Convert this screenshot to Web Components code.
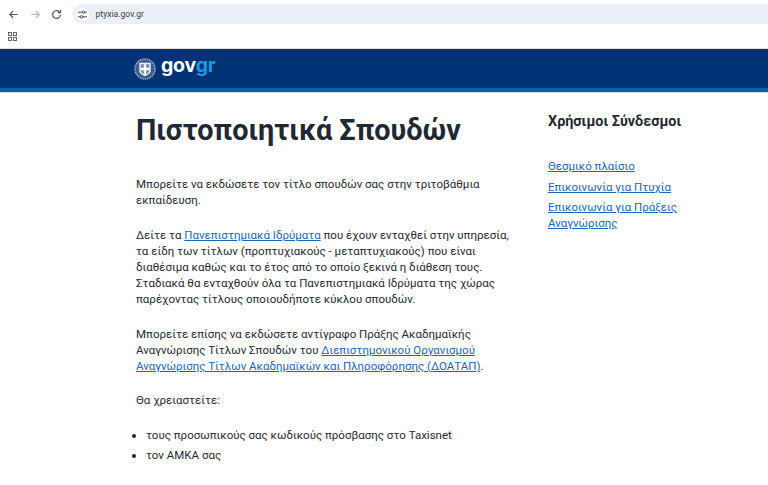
<!DOCTYPE html>
<html lang="el"><head><meta charset="utf-8"><style>
html,body{margin:0;padding:0;height:100%;overflow:hidden;background:#fff;font-family:Roboto,"Liberation Sans",sans-serif;color:#1f2933}
</style></head><body>
<browser-bar></browser-bar>
<site-header></site-header>
<page-layout>
<main-content></main-content>
<side-links></side-links>
</page-layout>
<script>
function def(name,html){customElements.define(name,class extends HTMLElement{constructor(){super();this.attachShadow({mode:'open'}).innerHTML=html}})}
def('browser-bar',`<style>
:host{display:block;height:49px;background:#fff;box-sizing:border-box;border-bottom:1px solid #d8dadd}
.top{height:28px;display:flex;align-items:center;padding-left:8px;gap:10.5px}
svg{display:block;flex:none}
.omni{flex:1;height:20px;border-radius:10px 0 0 10px;background:#ebf0f8;display:flex;align-items:center;gap:6.5px;padding-left:3.5px;box-sizing:border-box;font:8.6px Roboto,sans-serif;color:#3c4043}
.tune{width:13px;height:13px;border-radius:50%;background:#fff;display:flex;align-items:center;justify-content:center}
.book{height:17px;display:flex;align-items:center;padding-left:8px}
</style>
<div class="top">
<svg width="11" height="11" viewBox="0 0 12 12" fill="none" stroke="#555" stroke-width="1.3"><path d="M10.500 6H2M5.600 2.400L2 6l3.600 3.600"/></svg>
<svg width="11" height="11" viewBox="0 0 12 12" fill="none" stroke="#b0b2b4" stroke-width="1.3"><path d="M1.500 6H10M6.400 2.400L10 6l-3.600 3.600"/></svg>
<svg width="11" height="11" viewBox="0 0 12 12" fill="none" stroke="#555" stroke-width="1.3"><path d="M10.200 6.200A4.200 4.200 0 1 1 8.900 3"/><path d="M10.400 1v3H7.400"/></svg>
<div class="omni"><span class="tune"><svg width="9" height="9" viewBox="0 0 9 9" fill="none" stroke="#474747" stroke-width="1"><path d="M0 2.200h4M7 2.200h2M2 6.800h-2M5 6.800h4"/><circle cx="5.500" cy="2.200" r="1.200"/><circle cx="3.500" cy="6.800" r="1.200"/></svg></span><span>ptyxia.gov.gr</span></div>
</div>
<div class="book"><svg width="9" height="9" viewBox="0 0 9 9" fill="none" stroke="#666" stroke-width="1"><rect x=".5" y=".5" width="3" height="3"/><rect x="5.500" y=".5" width="3" height="3"/><rect x=".5" y="5.500" width="3" height="3"/><rect x="5.500" y="5.500" width="3" height="3"/></svg></div>`);
def('site-header',`<style>
:host{display:block;height:39px;background:#003375;border-bottom:4px solid #0565b0;box-shadow:0 1px 0 #d5dbe3;padding-left:134px}
.logo{display:flex;align-items:center;height:39px;gap:5px}
svg{display:block}
.w{font:700 19.5px/1 Inter,Roboto,sans-serif;letter-spacing:-.2px;color:#fff;position:relative;top:-3px}
.w b{font-weight:700;color:#1d9be0}
</style><div class="logo">
<svg width="22" height="22" viewBox="0 0 23 23"><circle cx="11.500" cy="11.500" r="10.500" fill="#3a5c8e" stroke="#a9bbd2" stroke-width="1.500" stroke-dasharray="1.200 .7"/><path d="M5.500 5h12v8.500c0 2.400-3 4-6 5.500-3-1.500-6-3.100-6-5.500z" fill="#eef2f7"/><path d="M7 6.500h9v7c0 1.600-2.200 2.800-4.500 4-2.300-1.200-4.500-2.400-4.500-4z" fill="#6f8db5"/><path d="M10.300 6.500h2.400v11h-2.400zM7 10.300h9v2.400H7z" fill="#fff"/></svg>
<span class="w">gov<b>gr</b></span></div>`);
def('page-layout',`<style>
:host{display:flex;padding-left:136px;box-sizing:border-box;width:768px}
::slotted(main-content){width:376px;flex:none}
::slotted(side-links){margin-left:36px;width:150px;flex:none}
</style><slot></slot>`);
def('main-content',`<style>
:host{display:block;font-size:11.5px;line-height:16.2px;color:#1f2933}
h1{font:700 28.8px/36px Roboto,sans-serif;margin:20px 0 28px;color:#1f2933;white-space:nowrap}
p{margin:0 0 18.1px}
p.last{margin:0}
a{color:#1a66b8}
ul{margin:18.3px 0 0;padding:0 0 0 10px;list-style:disc}
li{margin-bottom:3.8px;line-height:16.2px}
</style>
<h1>Πιστοποιητικά Σπουδών</h1>
<p>Μπορείτε να εκδώσετε τον τίτλο σπουδών σας στην τριτοβάθμια εκπαίδευση.</p>
<p>Δείτε τα <a href="#">Πανεπιστημιακά Ιδρύματα</a> που έχουν ενταχθεί στην υπηρεσία, τα είδη των τίτλων (προπτυχιακούς - μεταπτυχιακούς) που είναι διαθέσιμα καθώς και το έτος από το οποίο ξεκινά η διάθεση τους. Σταδιακά θα ενταχθούν όλα τα Πανεπιστημιακά Ιδρύματα της χώρας παρέχοντας τίτλους οποιουδήποτε κύκλου σπουδών.</p>
<p>Μπορείτε επίσης να εκδώσετε αντίγραφο Πράξης Ακαδημαϊκής Αναγνώρισης Τίτλων Σπουδών του <a href="#">Διεπιστημονικού Οργανισμού Αναγνώρισης Τίτλων Ακαδημαϊκών και Πληροφόρησης (ΔΟΑΤΑΠ)</a>.</p>
<p class="last">Θα χρειαστείτε:</p>
<ul><li>τους προσωπικούς σας κωδικούς πρόσβασης στο Taxisnet</li><li>τον ΑΜΚΑ σας</li></ul>`);
def('side-links',`<style>
:host{display:block;font-size:11.5px;line-height:16.2px}
h2{font:700 14.4px/20px Roboto,sans-serif;margin:20px 0 26px;color:#1f2933}
ul{list-style:none;margin:0;padding:0}
li{margin-bottom:4.4px}
a{color:#1a66b8}
</style><h2>Χρήσιμοι Σύνδεσμοι</h2>
<ul><li><a href="#">Θεσμικό πλαίσιο</a></li><li><a href="#">Επικοινωνία για Πτυχία</a></li><li><a href="#">Επικοινωνία για Πράξεις Αναγνώρισης</a></li></ul>`);
</script></body></html>
